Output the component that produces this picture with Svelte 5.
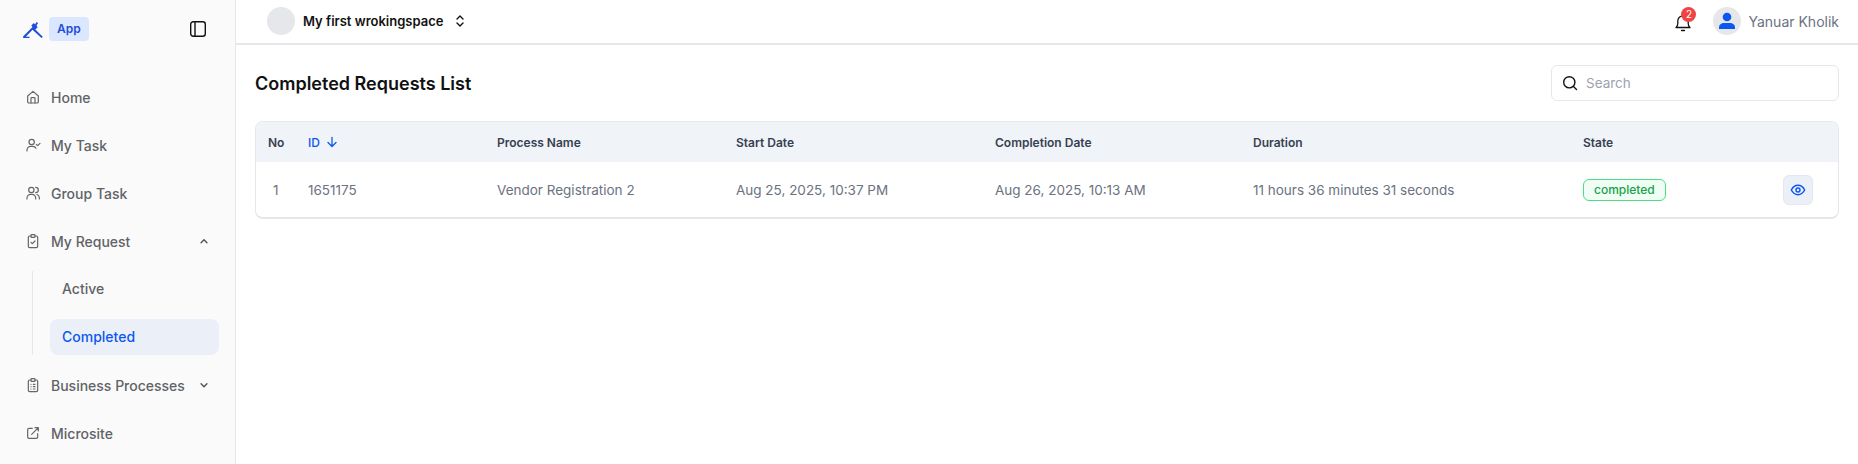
<script>
  const nav = [
    { label: 'Home', icon: 'home' },
    { label: 'My Task', icon: 'task' },
    { label: 'Group Task', icon: 'group' },
    { label: 'My Request', icon: 'request', chevron: 'up' },
    { label: 'Business Processes', icon: 'process', chevron: 'down' },
    { label: 'Microsite', icon: 'link' }
  ];

  const columns = ['No', 'ID', 'Process Name', 'Start Date', 'Completion Date', 'Duration', 'State', ''];
  const row = {
    no: '1',
    id: '1651175',
    name: 'Vendor Registration 2',
    start: 'Aug 25, 2025, 10:37 PM',
    end: 'Aug 26, 2025, 10:13 AM',
    duration: '11 hours 36 minutes 31 seconds'
  };
</script>

{#snippet navIcon(name)}
  <svg class="nav-icon" viewBox="0 0 24 24" fill="none" stroke="currentColor" stroke-width="2" stroke-linecap="round" stroke-linejoin="round">
    {#if name === 'home'}
      <path d="M4 10.5 12 3.5l8 7V19a2 2 0 0 1-2 2H6a2 2 0 0 1-2-2z" />
      <path d="M9 21v-7a1 1 0 0 1 1-1h4a1 1 0 0 1 1 1v7" />
    {:else if name === 'task'}
      <circle cx="10" cy="7.5" r="4" />
      <path d="M3 21v-1.500a5.500 5.500 0 0 1 5.500-5.500h3a5.500 5.500 0 0 1 5 3" />
      <path d="m17 11 2 2 3.500-3.500" />
    {:else if name === 'group'}
      <circle cx="9.500" cy="7.500" r="4" />
      <path d="M3 21v-1.500a5.500 5.500 0 0 1 5.500-5.500h2a5.500 5.500 0 0 1 5.500 5.500V21" />
      <path d="M16 3.500a4 4 0 0 1 0 8" />
      <path d="M18 14.200a5.500 5.500 0 0 1 3.500 5.100V21" />
    {:else if name === 'request'}
      <path d="M9 4.500H7a2 2 0 0 0-2 2V20a2 2 0 0 0 2 2h10a2 2 0 0 0 2-2V6.500a2 2 0 0 0-2-2h-2" />
      <rect x="9" y="2.500" width="6" height="4" rx="1" />
      <path d="m9 14 2 2 4-4" />
    {:else if name === 'process'}
      <path d="M9 4.500H7a2 2 0 0 0-2 2V20a2 2 0 0 0 2 2h10a2 2 0 0 0 2-2V6.500a2 2 0 0 0-2-2h-2" />
      <rect x="9" y="2.500" width="6" height="4" rx="1" />
      <path d="M9 11h.01M9 14.500h.01M9 18h.01M12.500 11H15M12.500 14.500H15M12.500 18H15" />
    {:else if name === 'link'}
      <path d="M11 5H6a2 2 0 0 0-2 2v11a2 2 0 0 0 2 2h11a2 2 0 0 0 2-2v-5" />
      <path d="M10 14 20 4M15 4h5v5" />
    {/if}
  </svg>
{/snippet}

{#snippet chevron(dir)}
  <svg class="chev" viewBox="0 0 24 24" fill="none" stroke="currentColor" stroke-width="2.500" stroke-linecap="round" stroke-linejoin="round">
    {#if dir === 'up'}
      <path d="m7 15 5-5 5 5" />
    {:else}
      <path d="m7 10 5 5 5-5" />
    {/if}
  </svg>
{/snippet}

<div class="layout">
  <aside class="sidebar">
    <div class="brand">
      <div class="brand-left">
        <svg class="logo" width="20" height="17" viewBox="0 0 20 17" fill="#1d4ed8">
          <path d="M0 15.500 9.500 6l-1.200-1.400L10.800 2l1.300 1.500L13.500 1l1.500 1-1.500 2.700 1.200 1.500-2.400 2.200L19.800 15.800 18.500 17l-9-8.300L2.800 15.800H7L6 17H.3z" />
        </svg>
        <span class="badge">App</span>
      </div>
      <svg class="panel" width="16" height="16" viewBox="0 0 16 16" fill="none" stroke="#111" stroke-width="1.400">
        <rect x="0.700" y="0.700" width="14.600" height="14.600" rx="2.500" />
        <path d="M5 .7v14.600" />
      </svg>
    </div>

    <nav class="menu">
      {#each nav as item}
        <div class="item">
          {@render navIcon(item.icon)}
          <span class="label">{item.label}</span>
          {#if item.chevron}{@render chevron(item.chevron)}{/if}
        </div>
        {#if item.label === 'My Request'}
          <div class="sub">
            <div class="sub-item">Active</div>
            <div class="sub-item on">Completed</div>
          </div>
        {/if}
      {/each}
    </nav>
  </aside>

  <div class="main">
    <header class="topbar">
      <div class="workspace">
        <span class="avatar"></span>
        <span class="ws-name">My first wrokingspace</span>
        <svg width="12" height="14" viewBox="0 0 12 14" fill="none" stroke="#111" stroke-width="1.400" stroke-linecap="round" stroke-linejoin="round">
          <path d="M3 5l3-3 3 3M3 9l3 3 3-3" />
        </svg>
      </div>
      <div class="top-right">
        <div class="bell">
          <svg width="16" height="18" viewBox="0 0 16 18" fill="none" stroke="#111" stroke-width="1.300" stroke-linecap="round" stroke-linejoin="round">
            <path d="M1 13.500c1.200-1 1.800-2.200 1.800-4V7a5.200 5.200 0 0 1 10.400 0v2.500c0 1.800.6 3 1.800 4z" />
            <path d="M6.500 16.500h3" />
          </svg>
          <span class="count">2</span>
        </div>
        <div class="user">
          <span class="avatar">
            <svg width="18" height="18" viewBox="0 0 18 18" fill="#0b57f0">
              <circle cx="9" cy="5" r="4.300" />
              <path d="M1 17v-1.500C1 12.500 3.500 11 6 11h6c2.500 0 5 1.500 5 4.500V17z" />
            </svg>
          </span>
          <span class="user-name">Yanuar Kholik</span>
        </div>
      </div>
    </header>

    <main class="content">
      <div class="heading">
        <h1>Completed Requests List</h1>
        <label class="search">
          <svg width="16" height="16" viewBox="0 0 16 16" fill="none" stroke="#111" stroke-width="1.400" stroke-linecap="round">
            <circle cx="7.300" cy="7.300" r="5.600" />
            <path d="m11.500 11.500 3 3" />
          </svg>
          <input placeholder="Search" />
        </label>
      </div>

      <div class="table">
        <div class="tr head">
          {#each columns as col}
            <div class="th" class:sorted={col === 'ID'}>
              {col}
              {#if col === 'ID'}
                <svg width="12" height="12" viewBox="0 0 12 12" fill="none" stroke="#0b57f0" stroke-width="1.300" stroke-linecap="round" stroke-linejoin="round">
                  <path d="M6 1.500v9M2 6.500l4 4 4-4" />
                </svg>
              {/if}
            </div>
          {/each}
        </div>
        <div class="tr body">
          <div class="no">{row.no}</div>
          <div>{row.id}</div>
          <div>{row.name}</div>
          <div>{row.start}</div>
          <div>{row.end}</div>
          <div>{row.duration}</div>
          <div><span class="state">completed</span></div>
          <div class="actions">
            <button class="view" aria-label="View">
              <svg width="16" height="16" viewBox="0 0 24 24" fill="none" stroke="#0b57f0" stroke-width="2.200" stroke-linecap="round" stroke-linejoin="round">
                <path d="M2 12c2.500-4.700 5.800-7 10-7s7.500 2.300 10 7c-2.500 4.700-5.800 7-10 7s-7.500-2.300-10-7z" />
                <circle cx="12" cy="12" r="3" />
              </svg>
            </button>
          </div>
        </div>
      </div>
    </main>
  </div>
</div>

<style>
  :global(body) {
    margin: 0;
    background: #fff;
    font-family: Inter, "Liberation Sans", sans-serif;
  }

  .layout {
    display: flex;
    height: 464px;
    overflow: hidden;
  }

  .sidebar {
    flex: 0 0 236px;
    box-sizing: border-box;
    background: #fafafa;
    border-right: 1px solid #e5e7eb;
    padding: 17px 16px 0 23px;
  }

  .brand {
    display: flex;
    align-items: center;
    justify-content: space-between;
    padding-right: 13px;
    height: 24px;
  }

  .brand-left {
    display: flex;
    align-items: center;
    gap: 6px;
  }

  .badge {
    background: #dbe7fe;
    color: #1d4ed8;
    font-size: 12px;
    font-weight: 600;
    padding: 0 8px;
    height: 24px;
    line-height: 24px;
    border-radius: 4px;
  }

  .menu {
    margin-top: 38px;
    display: flex;
    flex-direction: column;
    gap: 12px;
    color: #5f6368;
    font-size: 14px;
    font-weight: 500;
  }

  .item {
    display: flex;
    align-items: center;
    height: 36px;
    gap: 10px;
    padding-left: 2px;
    padding-right: 8px;
  }

  .nav-icon {
    width: 16px;
    height: 16px;
    stroke-width: 1.800;
    color: #666;
    flex: none;
  }

  .label {
    flex: 1;
  }

  .chev {
    width: 14px;
    height: 14px;
    color: #555;
  }

  .sub {
    margin-left: 9px;
    padding-left: 17px;
    border-left: 1px solid #e5e7eb;
    display: flex;
    flex-direction: column;
    gap: 12px;
  }

  .sub-item {
    height: 36px;
    line-height: 36px;
    padding-left: 12px;
    border-radius: 8px;
  }

  .sub-item.on {
    background: #ebf0f8;
    color: #0b57f0;
  }

  .main {
    flex: 1;
    min-width: 0;
  }

  .topbar {
    height: 45px;
    box-sizing: border-box;
    border-bottom: 2px solid #e5e7eb;
    display: flex;
    align-items: center;
    justify-content: space-between;
    padding: 0 19px 1px 31px;
  }

  .workspace,
  .user,
  .top-right {
    display: flex;
    align-items: center;
  }

  .avatar {
    width: 28px;
    height: 28px;
    border-radius: 50%;
    background: #e5e7eb;
    display: flex;
    align-items: center;
    justify-content: center;
  }

  .ws-name {
    margin: 0 11px 0 8px;
    font-size: 13px;
    font-weight: 600;
    color: #111;
  }

  .top-right {
    gap: 22px;
  }

  .bell {
    position: relative;
    display: flex;
    padding-top: 4px;
  }

  .count {
    position: absolute;
    top: -3px;
    left: 6px;
    width: 15px;
    height: 15px;
    border-radius: 50%;
    background: #ef4444;
    color: #fff;
    font-size: 10px;
    line-height: 15px;
    text-align: center;
  }

  .user {
    gap: 7px;
  }

  .user-name {
    font-size: 14px;
    color: #6b7280;
  }

  .content {
    padding: 20px 19px 0 19px;
  }

  .heading {
    display: flex;
    align-items: center;
    justify-content: space-between;
    margin-bottom: 20px;
  }

  h1 {
    margin: 0;
    font-size: 18px;
    font-weight: 600;
    color: #111;
  }

  .search {
    width: 288px;
    height: 36px;
    box-sizing: border-box;
    border: 1px solid #e5e7eb;
    border-radius: 6px;
    display: flex;
    align-items: center;
    gap: 6px;
    padding: 0 10px;
  }

  .search input {
    border: 0;
    outline: 0;
    flex: 1;
    min-width: 0;
    font: 400 13.500px Inter, sans-serif;
  }

  .search input::placeholder {
    color: #9ca3af;
  }

  .table {
    border: 1px solid #e5e7eb;
    border-bottom-width: 2px;
    border-radius: 8px;
    overflow: hidden;
  }

  .tr {
    display: grid;
    grid-template-columns: 52px 189px 239px 259px 258px 330px 190px 1fr;
    align-items: center;
  }

  .head {
    height: 40px;
    background: #f0f3f8;
    color: #374151;
    font-size: 12px;
    font-weight: 600;
  }

  .th:first-child {
    padding-left: 12px;
  }

  .sorted {
    color: #0b57f0;
    font-weight: 500;
    display: flex;
    align-items: center;
    gap: 6px;
  }

  .body {
    height: 55px;
    color: #6b7280;
    font-size: 13.500px;
  }

  .no {
    padding-left: 17px;
  }

  .state {
    display: inline-block;
    border: 1px solid #4ade80;
    background: #f0fdf4;
    color: #16a34a;
    border-radius: 6px;
    font-size: 12px;
    font-weight: 500;
    line-height: 20px;
    padding: 0 10px;
  }

  .actions {
    display: flex;
    justify-content: flex-end;
    padding-right: 25px;
  }

  .view {
    width: 30px;
    height: 30px;
    padding: 0;
    border: 1px solid #e5e7eb;
    border-radius: 6px;
    background: #ebf0f8;
    display: flex;
    align-items: center;
    justify-content: center;
  }
</style>
